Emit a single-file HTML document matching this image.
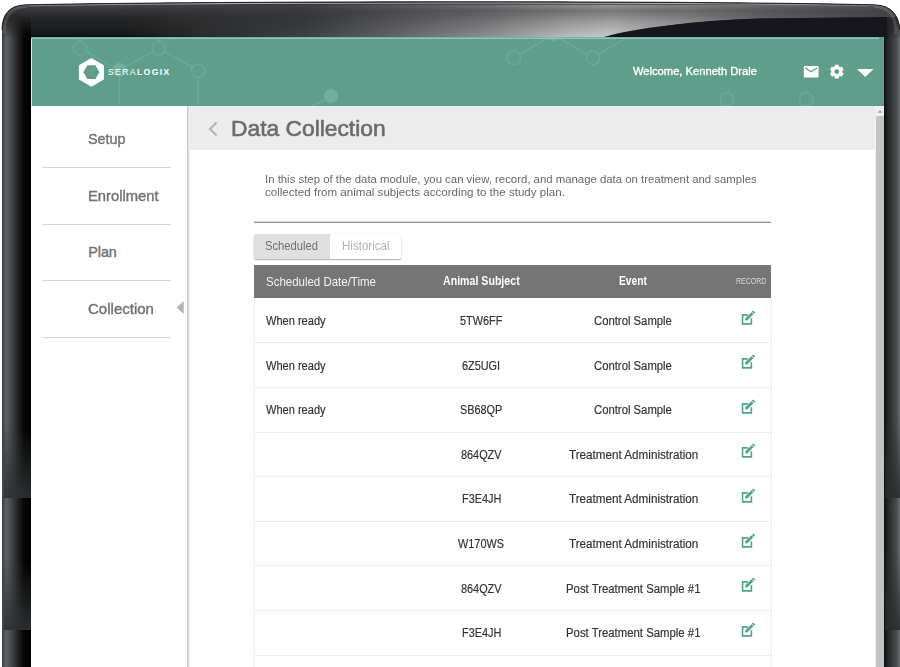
<!DOCTYPE html>
<html><head><meta charset="utf-8"><style>
html,body{margin:0;padding:0}
body{width:900px;height:667px;overflow:hidden;position:relative;background:#fff;font-family:"Liberation Sans",sans-serif}
.abs{position:absolute}
.t{position:absolute;white-space:nowrap}
</style></head><body>

<svg class="abs" width="900" height="667" viewBox="0 0 900 667" style="left:0;top:0">
 <defs>
  <linearGradient id="lg" x1="0" x2="1" y1="0" y2="0">
   <stop offset="0" stop-color="#3a3e40"/>
   <stop offset="0.14" stop-color="#5e5f62"/>
   <stop offset="0.3" stop-color="#4a4b4d"/>
   <stop offset="0.55" stop-color="#222324"/>
   <stop offset="0.75" stop-color="#060606"/>
   <stop offset="1" stop-color="#000"/>
  </linearGradient>
  <linearGradient id="rg" x1="0" x2="1" y1="0" y2="0">
   <stop offset="0" stop-color="#0e0f10"/>
   <stop offset="0.2" stop-color="#222426"/>
   <stop offset="0.8" stop-color="#4a4c4f"/>
   <stop offset="1" stop-color="#6a6c6f"/>
  </linearGradient>
  <linearGradient id="tb" gradientUnits="userSpaceOnUse" x1="0" x2="0" y1="3" y2="37">
   <stop offset="0" stop-color="#1a1a1a"/>
   <stop offset="0.08" stop-color="#444446"/>
   <stop offset="0.2" stop-color="#37373a"/>
   <stop offset="0.45" stop-color="#252627"/>
   <stop offset="0.75" stop-color="#1d1e1f"/>
   <stop offset="0.95" stop-color="#131415"/>
   <stop offset="1" stop-color="#0a0a0a"/>
  </linearGradient>
  <linearGradient id="lgm" gradientUnits="userSpaceOnUse" x1="0" x2="0" y1="16" y2="38">
   <stop offset="0" stop-color="#fff" stop-opacity="0"/>
   <stop offset="1" stop-color="#fff" stop-opacity="1"/>
  </linearGradient>
  <mask id="lm" maskUnits="userSpaceOnUse" x="0" y="0" width="900" height="667">
   <rect x="0" y="0" width="900" height="667" fill="url(#lgm)"/>
  </mask>
  <linearGradient id="gl" gradientUnits="userSpaceOnUse" x1="120" x2="900" y1="0" y2="0">
   <stop offset="0" stop-color="#3a3c3e" stop-opacity="0"/>
   <stop offset="0.105" stop-color="#3a3c3e" stop-opacity="0.6"/>
   <stop offset="0.236" stop-color="#3e4042"/>
   <stop offset="0.366" stop-color="#6a6b6d"/>
   <stop offset="0.471" stop-color="#8e8f91"/>
   <stop offset="0.576" stop-color="#bcbdbe"/>
   <stop offset="0.628" stop-color="#cacbcc"/>
   <stop offset="0.733" stop-color="#a8a9aa"/>
   <stop offset="0.838" stop-color="#7a7b7d"/>
   <stop offset="1" stop-color="#505153"/>
  </linearGradient>
  <linearGradient id="glv" gradientUnits="userSpaceOnUse" x1="0" x2="0" y1="4" y2="37">
   <stop offset="0" stop-color="#fff" stop-opacity="0.6"/>
   <stop offset="0.2" stop-color="#fff" stop-opacity="0.45"/>
   <stop offset="0.5" stop-color="#fff" stop-opacity="0.72"/>
   <stop offset="1" stop-color="#fff" stop-opacity="1"/>
  </linearGradient>
  <filter id="bl" x="-5%" y="-50%" width="110%" height="200%"><feGaussianBlur stdDeviation="0.7"/></filter>
  <mask id="glm" maskUnits="userSpaceOnUse" x="0" y="0" width="900" height="40">
   <rect x="0" y="0" width="900" height="40" fill="url(#glv)"/>
  </mask>
  <linearGradient id="tl" gradientUnits="userSpaceOnUse" x1="20" x2="880" y1="0" y2="0">
   <stop offset="0" stop-color="#707070"/>
   <stop offset="0.2" stop-color="#a0a0a0"/>
   <stop offset="0.6" stop-color="#d0d0d0"/>
   <stop offset="0.85" stop-color="#a0a0a0"/>
   <stop offset="1" stop-color="#707070"/>
  </linearGradient>
 </defs>
 <clipPath id="oc"><path d="M2,30 Q2,5.4 26,4.8 C200,1.0 700,0.5 874,4.8 Q898,5.4 900,30 L900,667 L2,667 Z"/></clipPath>
 <g clip-path="url(#oc)">
 <rect x="0" y="0" width="900" height="667" fill="#2b2c2e"/>
 <rect x="0" y="0" width="900" height="37" fill="url(#tb)"/>
 <rect x="2" y="0" width="29" height="667" fill="url(#lg)" mask="url(#lm)"/>
 <linearGradient id="bandg" x1="0" x2="0" y1="0" y2="1">
  <stop offset="0" stop-color="#2e3132" stop-opacity="0"/>
  <stop offset="1" stop-color="#2e3132" stop-opacity="0.92"/>
 </linearGradient>
 <rect x="4" y="425" width="27" height="73" fill="url(#bandg)"/>
 <rect x="4" y="560" width="27" height="70" fill="url(#bandg)"/>
 <rect x="884" y="0" width="16" height="667" fill="url(#rg)" mask="url(#lm)"/>
 <linearGradient id="bandr" x1="0" x2="0" y1="0" y2="1">
  <stop offset="0" stop-color="#2a2c2d" stop-opacity="0"/>
  <stop offset="1" stop-color="#2a2c2d" stop-opacity="0.9"/>
 </linearGradient>
 <rect x="885" y="420" width="15" height="78" fill="url(#bandr)"/>
 <rect x="885" y="555" width="15" height="75" fill="url(#bandr)"/>
 <path d="M120,4 L900,5 L900,17 L760,18.5 C700,21 630,28 605,37 L120,37 Z" fill="url(#gl)" mask="url(#glm)"/>
 <path d="M598,37.5 C625,35 640,29 680,24 C710,20.5 740,19 760,18.5 L887,17 L887,38 Z" fill="#16191a" filter="url(#bl)"/>
 <path d="M3.8,34 Q3.8,7.2 26,6.6" fill="none" stroke="rgba(255,255,255,0.13)" stroke-width="3"/>
 <path d="M874,6.6 Q896.2,7.2 896.2,34" fill="none" stroke="rgba(255,255,255,0.13)" stroke-width="3"/>
 </g>
 <path d="M26,5.9 C200,2.3 700,1.8 874,5.9" fill="none" stroke="url(#tl)" stroke-width="1.2"/>
 <path d="M2,30 Q2,5.4 26,4.8 C200,1.0 700,0.5 874,4.8 Q898,5.4 900,30" fill="none" stroke="#1a1a1a" stroke-width="0.8"/>
</svg>

<div class="abs" style="left:31px;top:37px;width:853px;height:630px;background:#fff;overflow:hidden"></div>
<div class="abs" style="left:31px;top:37px;width:853px;height:69px;background:#5f9e8b"></div>
<div class="abs" style="left:31px;top:37px;width:848px;height:1px;background:#6cb4a3"></div>
<div class="abs" style="left:31px;top:38px;width:848px;height:1px;background:#93c2ba"></div>
<div class="abs" style="left:31px;top:39px;width:1px;height:67px;background:#e6e6e6"></div>
<svg class="abs" width="853" height="69" viewBox="31 37 853 69" style="left:31px;top:37px">
<g stroke="rgba(140,210,190,0.22)" stroke-width="1.5" fill="none">
 <line x1="80" y1="30" x2="80" y2="41.6"/>
 <line x1="85.8" y1="51.6" x2="113.8" y2="66.6"/>
 <line x1="119.6" y1="76.6" x2="119.6" y2="106"/>
 <line x1="125.4" y1="66.6" x2="153.1" y2="51.6"/>
 <line x1="158.9" y1="41.6" x2="158.9" y2="30"/>
 <line x1="164.7" y1="51.6" x2="192.4" y2="67.3"/>
 <line x1="198.2" y1="77.3" x2="198.2" y2="106"/>
 <line x1="325" y1="100" x2="310" y2="107"/>
 <line x1="519.6" y1="54.4" x2="547.5" y2="38"/>
 <line x1="559" y1="38" x2="587" y2="54.4"/>
 <line x1="598.7" y1="54.4" x2="626" y2="38"/>
 <circle cx="80" cy="48.3" r="6.7"/>
 <circle cx="158.9" cy="48.3" r="6.7"/>
 <circle cx="198.2" cy="70.6" r="6.7"/>
 <circle cx="513.8" cy="57.7" r="6.7"/>
 <circle cx="592.9" cy="57.7" r="6.7"/>
 <circle cx="726.8" cy="99.2" r="6.7"/>
 <circle cx="806.3" cy="99.2" r="6.7"/>
</g>
<g fill="rgba(140,210,190,0.35)">
 <circle cx="119.6" cy="69.9" r="7"/>
 <circle cx="331.1" cy="96.1" r="7"/>
 <circle cx="553.3" cy="34" r="7"/>
</g>
</svg>
<svg class="abs" width="30" height="30" viewBox="0 0 30 30" style="left:77px;top:57px">
<path fill="#fff" fill-rule="evenodd" d="M14.4,1 L26.9,8.2 L26.9,22.6 L14.4,29.8 L1.9,22.6 L1.9,8.2 Z M6.4,15.2 L10.4,8.3 L18.4,8.3 L22.4,15.2 L18.4,22.1 L10.4,22.1 Z"/>
</svg>
<div class="t" style="left:108.0px;top:68.1px;font-size:8.7px;line-height:8.7px;color:#fff;letter-spacing:1.33px;white-space:nowrap"><span style="font-weight:normal">SERA</span><span style="font-weight:bold">LOGIX</span></div>
<div class="t" style="left:633.40px;top:66.27px;font-size:11.5px;line-height:11.5px;color:#fff;font-weight:normal;letter-spacing:0.000px;-webkit-text-stroke:0.35px #fff;transform:scaleX(0.9715);transform-origin:0 0;">Welcome, Kenneth Drale</div>
<svg class="abs" width="80" height="20" viewBox="0 0 80 20" style="left:800px;top:62px">
 <rect x="3.8" y="4" width="14.7" height="11.5" rx="1.2" fill="#fff"/>
 <polyline points="5.4,6.2 11.1,9.7 16.7,6.2" fill="none" stroke="#5f9e8b" stroke-width="1.25" stroke-linecap="round" stroke-linejoin="round"/>
 <g transform="translate(36.8,9.6)">
  <circle r="5.5" fill="#fff"/>
  <g fill="#fff">
   <rect x="-2.1" y="-6.9" width="4.2" height="13.8" rx="0.7"/>
   <rect x="-2.1" y="-6.9" width="4.2" height="13.8" rx="0.7" transform="rotate(60)"/>
   <rect x="-2.1" y="-6.9" width="4.2" height="13.8" rx="0.7" transform="rotate(120)"/>
  </g>
  <circle r="2.4" fill="#5f9e8b"/>
 </g>
 <polygon points="57,7 73.5,7 65.25,15" fill="#fff"/>
</svg>
<div class="abs" style="left:187px;top:106px;width:3px;height:561px;background:linear-gradient(90deg,#cdcdcd 0,#cdcdcd 1px,#dedede 1px,#dedede 2px,#f0f0f0 2px)"></div>
<div class="t" style="left:88.20px;top:132.00px;font-size:14.3px;line-height:14.3px;color:#717171;font-weight:normal;letter-spacing:0.000px;-webkit-text-stroke:0.39px #717171;transform:scaleX(1.0061);transform-origin:0 0;">Setup</div>
<div class="abs" style="left:42px;top:167.0px;width:129px;height:1px;background:#d4d4d4"></div>
<div class="t" style="left:88.20px;top:188.55px;font-size:14.3px;line-height:14.3px;color:#717171;font-weight:normal;letter-spacing:0.000px;-webkit-text-stroke:0.39px #717171;transform:scaleX(1.0343);transform-origin:0 0;">Enrollment</div>
<div class="abs" style="left:42px;top:223.6px;width:129px;height:1px;background:#d4d4d4"></div>
<div class="t" style="left:88.20px;top:245.10px;font-size:14.3px;line-height:14.3px;color:#717171;font-weight:normal;letter-spacing:0.000px;-webkit-text-stroke:0.39px #717171;">Plan</div>
<div class="abs" style="left:42px;top:280.2px;width:129px;height:1px;background:#d4d4d4"></div>
<div class="t" style="left:88.20px;top:301.65px;font-size:14.3px;line-height:14.3px;color:#717171;font-weight:normal;letter-spacing:0.000px;-webkit-text-stroke:0.39px #717171;transform:scaleX(1.0510);transform-origin:0 0;">Collection</div>
<div class="abs" style="left:42px;top:336.8px;width:129px;height:1px;background:#d4d4d4"></div>
<svg class="abs" width="10" height="16" style="left:176px;top:300px"><polygon points="7.7,1 7.7,14 0.7,7.5" fill="#b3b3b3"/></svg>
<div class="abs" style="left:190px;top:106px;width:685px;height:44.3px;background:#ececec"></div>
<svg class="abs" width="14" height="20" style="left:205px;top:119px"><polyline points="11.5,3.5 5,10 11.5,16.5" fill="none" stroke="#b5b5b5" stroke-width="2.2"/></svg>
<div class="t" style="left:231.10px;top:118.21px;font-size:22.2px;line-height:22.2px;color:#6b6b6b;font-weight:normal;letter-spacing:0.000px;-webkit-text-stroke:0.60px #6b6b6b;transform:scaleX(1.0276);transform-origin:0 0;">Data Collection</div>
<div class="abs" style="left:875px;top:106px;width:9px;height:561px;background:#f1f1f1"></div>
<svg class="abs" width="9" height="8" style="left:875px;top:107px"><polygon points="2.5,5.8 7.4,5.8 4.95,3" fill="#a3a3a3"/></svg>
<div class="abs" style="left:876px;top:116px;width:8px;height:551px;background:#c3c5c4"></div>
<div class="t" style="left:265.10px;top:173.87px;font-size:11.5px;line-height:11.5px;color:#686868;font-weight:normal;letter-spacing:0.000px;transform:scaleX(0.9886);transform-origin:0 0;">In this step of the data module, you can view, record, and manage data on treatment and samples</div>
<div class="t" style="left:265.10px;top:186.97px;font-size:11.5px;line-height:11.5px;color:#686868;font-weight:normal;letter-spacing:0.000px;transform:scaleX(1.0068);transform-origin:0 0;">collected from animal subjects according to the study plan.</div>
<div class="abs" style="left:254px;top:221px;width:517px;height:1px;background:#d8d8d8"></div>
<div class="abs" style="left:254px;top:222px;width:517px;height:1px;background:#959595"></div>
<div class="abs" style="left:254px;top:234px;width:147px;height:25px;background:#fff;box-shadow:0 1px 1.5px rgba(0,0,0,0.32),0 0 1px rgba(0,0,0,0.12);border-radius:2px"></div>
<div class="abs" style="left:254px;top:234px;width:75.5px;height:25px;background:#e0e0e0;border-radius:2px 0 0 2px"></div>
<div class="t" style="left:265.20px;top:239.90px;font-size:12.4px;line-height:12.4px;color:#6f6f6f;font-weight:normal;letter-spacing:0.000px;transform:scaleX(0.9026);transform-origin:0 0;">Scheduled</div>
<div class="t" style="left:341.80px;top:239.90px;font-size:12.4px;line-height:12.4px;color:#b0b0b0;font-weight:normal;letter-spacing:0.000px;transform:scaleX(0.9316);transform-origin:0 0;">Historical</div>
<div class="abs" style="left:254px;top:265px;width:517px;height:33px;background:#757575"></div>
<div class="t" style="left:265.80px;top:275.56px;font-size:12.1px;line-height:12.1px;color:#f2f2f2;font-weight:normal;letter-spacing:0.000px;transform:scaleX(0.9490);transform-origin:0 0;">Scheduled Date/Time</div>
<div class="t" style="left:443.05px;top:274.86px;font-size:12.1px;line-height:12.1px;color:#fff;font-weight:bold;letter-spacing:0.000px;transform:scaleX(0.8775);transform-origin:0 0;">Animal Subject</div>
<div class="t" style="left:619.40px;top:274.86px;font-size:12.1px;line-height:12.1px;color:#fff;font-weight:bold;letter-spacing:0.000px;transform:scaleX(0.8497);transform-origin:0 0;">Event</div>
<div class="t" style="left:735.90px;top:276.97px;font-size:8.3px;line-height:8.3px;color:#dcdcdc;font-weight:normal;letter-spacing:0.000px;transform:scaleX(0.8424);transform-origin:0 0;">RECORD</div>
<div class="abs" style="left:254px;top:298px;width:1px;height:369px;background:#eeeeee"></div>
<div class="abs" style="left:771px;top:298px;width:1px;height:369px;background:#eeeeee"></div>
<div class="t" style="left:265.80px;top:314.89px;font-size:12.3px;line-height:12.3px;color:#333;font-weight:normal;letter-spacing:0.000px;-webkit-text-stroke:0.18px #333;transform:scaleX(0.8987);transform-origin:0 0;">When ready</div>
<div class="t" style="left:460.23px;top:314.89px;font-size:12.3px;line-height:12.3px;color:#333;font-weight:normal;letter-spacing:0.000px;-webkit-text-stroke:0.18px #333;transform:scaleX(0.8850);transform-origin:0 0;">5TW6FF</div>
<div class="t" style="left:594.25px;top:314.89px;font-size:12.3px;line-height:12.3px;color:#333;font-weight:normal;letter-spacing:0.000px;-webkit-text-stroke:0.18px #333;transform:scaleX(0.9189);transform-origin:0 0;">Control Sample</div>
<svg class="abs" width="24" height="24" viewBox="0 0 24 24" style="left:736px;top:305.60px">
 <path d="M11.9,8.9 H6.55 V17.9 H15.4 V12.2" fill="none" stroke="#52a38b" stroke-width="1.6"/>
 <polygon points="9.10,14.50 11.47,14.18 17.41,8.24 15.36,6.19 9.42,12.13" fill="#52a38b"/>
 <polygon points="17.90,7.75 19.18,6.47 17.13,4.42 15.85,5.70" fill="#52a38b"/>
</svg>
<div class="abs" style="left:254px;top:342.2px;width:517px;height:1px;background:#ededed"></div>
<div class="t" style="left:265.80px;top:359.52px;font-size:12.3px;line-height:12.3px;color:#333;font-weight:normal;letter-spacing:0.000px;-webkit-text-stroke:0.18px #333;transform:scaleX(0.8987);transform-origin:0 0;">When ready</div>
<div class="t" style="left:462.34px;top:359.52px;font-size:12.3px;line-height:12.3px;color:#333;font-weight:normal;letter-spacing:0.000px;-webkit-text-stroke:0.18px #333;transform:scaleX(0.8850);transform-origin:0 0;">6Z5UGI</div>
<div class="t" style="left:594.25px;top:359.52px;font-size:12.3px;line-height:12.3px;color:#333;font-weight:normal;letter-spacing:0.000px;-webkit-text-stroke:0.18px #333;transform:scaleX(0.9189);transform-origin:0 0;">Control Sample</div>
<svg class="abs" width="24" height="24" viewBox="0 0 24 24" style="left:736px;top:350.23px">
 <path d="M11.9,8.9 H6.55 V17.9 H15.4 V12.2" fill="none" stroke="#52a38b" stroke-width="1.6"/>
 <polygon points="9.10,14.50 11.47,14.18 17.41,8.24 15.36,6.19 9.42,12.13" fill="#52a38b"/>
 <polygon points="17.90,7.75 19.18,6.47 17.13,4.42 15.85,5.70" fill="#52a38b"/>
</svg>
<div class="abs" style="left:254px;top:386.8px;width:517px;height:1px;background:#ededed"></div>
<div class="t" style="left:265.80px;top:404.15px;font-size:12.3px;line-height:12.3px;color:#333;font-weight:normal;letter-spacing:0.000px;-webkit-text-stroke:0.18px #333;transform:scaleX(0.8987);transform-origin:0 0;">When ready</div>
<div class="t" style="left:460.22px;top:404.15px;font-size:12.3px;line-height:12.3px;color:#333;font-weight:normal;letter-spacing:0.000px;-webkit-text-stroke:0.18px #333;transform:scaleX(0.8850);transform-origin:0 0;">SB68QP</div>
<div class="t" style="left:594.25px;top:404.15px;font-size:12.3px;line-height:12.3px;color:#333;font-weight:normal;letter-spacing:0.000px;-webkit-text-stroke:0.18px #333;transform:scaleX(0.9189);transform-origin:0 0;">Control Sample</div>
<svg class="abs" width="24" height="24" viewBox="0 0 24 24" style="left:736px;top:394.86px">
 <path d="M11.9,8.9 H6.55 V17.9 H15.4 V12.2" fill="none" stroke="#52a38b" stroke-width="1.6"/>
 <polygon points="9.10,14.50 11.47,14.18 17.41,8.24 15.36,6.19 9.42,12.13" fill="#52a38b"/>
 <polygon points="17.90,7.75 19.18,6.47 17.13,4.42 15.85,5.70" fill="#52a38b"/>
</svg>
<div class="abs" style="left:254px;top:431.5px;width:517px;height:1px;background:#ededed"></div>
<div class="t" style="left:461.13px;top:448.78px;font-size:12.3px;line-height:12.3px;color:#333;font-weight:normal;letter-spacing:0.000px;-webkit-text-stroke:0.18px #333;transform:scaleX(0.8850);transform-origin:0 0;">864QZV</div>
<div class="t" style="left:568.55px;top:448.78px;font-size:12.3px;line-height:12.3px;color:#333;font-weight:normal;letter-spacing:0.000px;-webkit-text-stroke:0.18px #333;transform:scaleX(0.9488);transform-origin:0 0;">Treatment Administration</div>
<svg class="abs" width="24" height="24" viewBox="0 0 24 24" style="left:736px;top:439.49px">
 <path d="M11.9,8.9 H6.55 V17.9 H15.4 V12.2" fill="none" stroke="#52a38b" stroke-width="1.6"/>
 <polygon points="9.10,14.50 11.47,14.18 17.41,8.24 15.36,6.19 9.42,12.13" fill="#52a38b"/>
 <polygon points="17.90,7.75 19.18,6.47 17.13,4.42 15.85,5.70" fill="#52a38b"/>
</svg>
<div class="abs" style="left:254px;top:476.1px;width:517px;height:1px;background:#ededed"></div>
<div class="t" style="left:461.74px;top:493.41px;font-size:12.3px;line-height:12.3px;color:#333;font-weight:normal;letter-spacing:0.000px;-webkit-text-stroke:0.18px #333;transform:scaleX(0.8850);transform-origin:0 0;">F3E4JH</div>
<div class="t" style="left:568.55px;top:493.41px;font-size:12.3px;line-height:12.3px;color:#333;font-weight:normal;letter-spacing:0.000px;-webkit-text-stroke:0.18px #333;transform:scaleX(0.9488);transform-origin:0 0;">Treatment Administration</div>
<svg class="abs" width="24" height="24" viewBox="0 0 24 24" style="left:736px;top:484.12px">
 <path d="M11.9,8.9 H6.55 V17.9 H15.4 V12.2" fill="none" stroke="#52a38b" stroke-width="1.6"/>
 <polygon points="9.10,14.50 11.47,14.18 17.41,8.24 15.36,6.19 9.42,12.13" fill="#52a38b"/>
 <polygon points="17.90,7.75 19.18,6.47 17.13,4.42 15.85,5.70" fill="#52a38b"/>
</svg>
<div class="abs" style="left:254px;top:520.7px;width:517px;height:1px;background:#ededed"></div>
<div class="t" style="left:458.41px;top:538.04px;font-size:12.3px;line-height:12.3px;color:#333;font-weight:normal;letter-spacing:0.000px;-webkit-text-stroke:0.18px #333;transform:scaleX(0.8850);transform-origin:0 0;">W170WS</div>
<div class="t" style="left:568.55px;top:538.04px;font-size:12.3px;line-height:12.3px;color:#333;font-weight:normal;letter-spacing:0.000px;-webkit-text-stroke:0.18px #333;transform:scaleX(0.9488);transform-origin:0 0;">Treatment Administration</div>
<svg class="abs" width="24" height="24" viewBox="0 0 24 24" style="left:736px;top:528.75px">
 <path d="M11.9,8.9 H6.55 V17.9 H15.4 V12.2" fill="none" stroke="#52a38b" stroke-width="1.6"/>
 <polygon points="9.10,14.50 11.47,14.18 17.41,8.24 15.36,6.19 9.42,12.13" fill="#52a38b"/>
 <polygon points="17.90,7.75 19.18,6.47 17.13,4.42 15.85,5.70" fill="#52a38b"/>
</svg>
<div class="abs" style="left:254px;top:565.4px;width:517px;height:1px;background:#ededed"></div>
<div class="t" style="left:461.13px;top:582.67px;font-size:12.3px;line-height:12.3px;color:#333;font-weight:normal;letter-spacing:0.000px;-webkit-text-stroke:0.18px #333;transform:scaleX(0.8850);transform-origin:0 0;">864QZV</div>
<div class="t" style="left:565.95px;top:582.67px;font-size:12.3px;line-height:12.3px;color:#333;font-weight:normal;letter-spacing:0.000px;-webkit-text-stroke:0.18px #333;transform:scaleX(0.9236);transform-origin:0 0;">Post Treatment Sample #1</div>
<svg class="abs" width="24" height="24" viewBox="0 0 24 24" style="left:736px;top:573.38px">
 <path d="M11.9,8.9 H6.55 V17.9 H15.4 V12.2" fill="none" stroke="#52a38b" stroke-width="1.6"/>
 <polygon points="9.10,14.50 11.47,14.18 17.41,8.24 15.36,6.19 9.42,12.13" fill="#52a38b"/>
 <polygon points="17.90,7.75 19.18,6.47 17.13,4.42 15.85,5.70" fill="#52a38b"/>
</svg>
<div class="abs" style="left:254px;top:610.0px;width:517px;height:1px;background:#ededed"></div>
<div class="t" style="left:461.74px;top:627.30px;font-size:12.3px;line-height:12.3px;color:#333;font-weight:normal;letter-spacing:0.000px;-webkit-text-stroke:0.18px #333;transform:scaleX(0.8850);transform-origin:0 0;">F3E4JH</div>
<div class="t" style="left:565.95px;top:627.30px;font-size:12.3px;line-height:12.3px;color:#333;font-weight:normal;letter-spacing:0.000px;-webkit-text-stroke:0.18px #333;transform:scaleX(0.9236);transform-origin:0 0;">Post Treatment Sample #1</div>
<svg class="abs" width="24" height="24" viewBox="0 0 24 24" style="left:736px;top:618.01px">
 <path d="M11.9,8.9 H6.55 V17.9 H15.4 V12.2" fill="none" stroke="#52a38b" stroke-width="1.6"/>
 <polygon points="9.10,14.50 11.47,14.18 17.41,8.24 15.36,6.19 9.42,12.13" fill="#52a38b"/>
 <polygon points="17.90,7.75 19.18,6.47 17.13,4.42 15.85,5.70" fill="#52a38b"/>
</svg>
<div class="abs" style="left:254px;top:654.6px;width:517px;height:1px;background:#ededed"></div>
</body></html>
